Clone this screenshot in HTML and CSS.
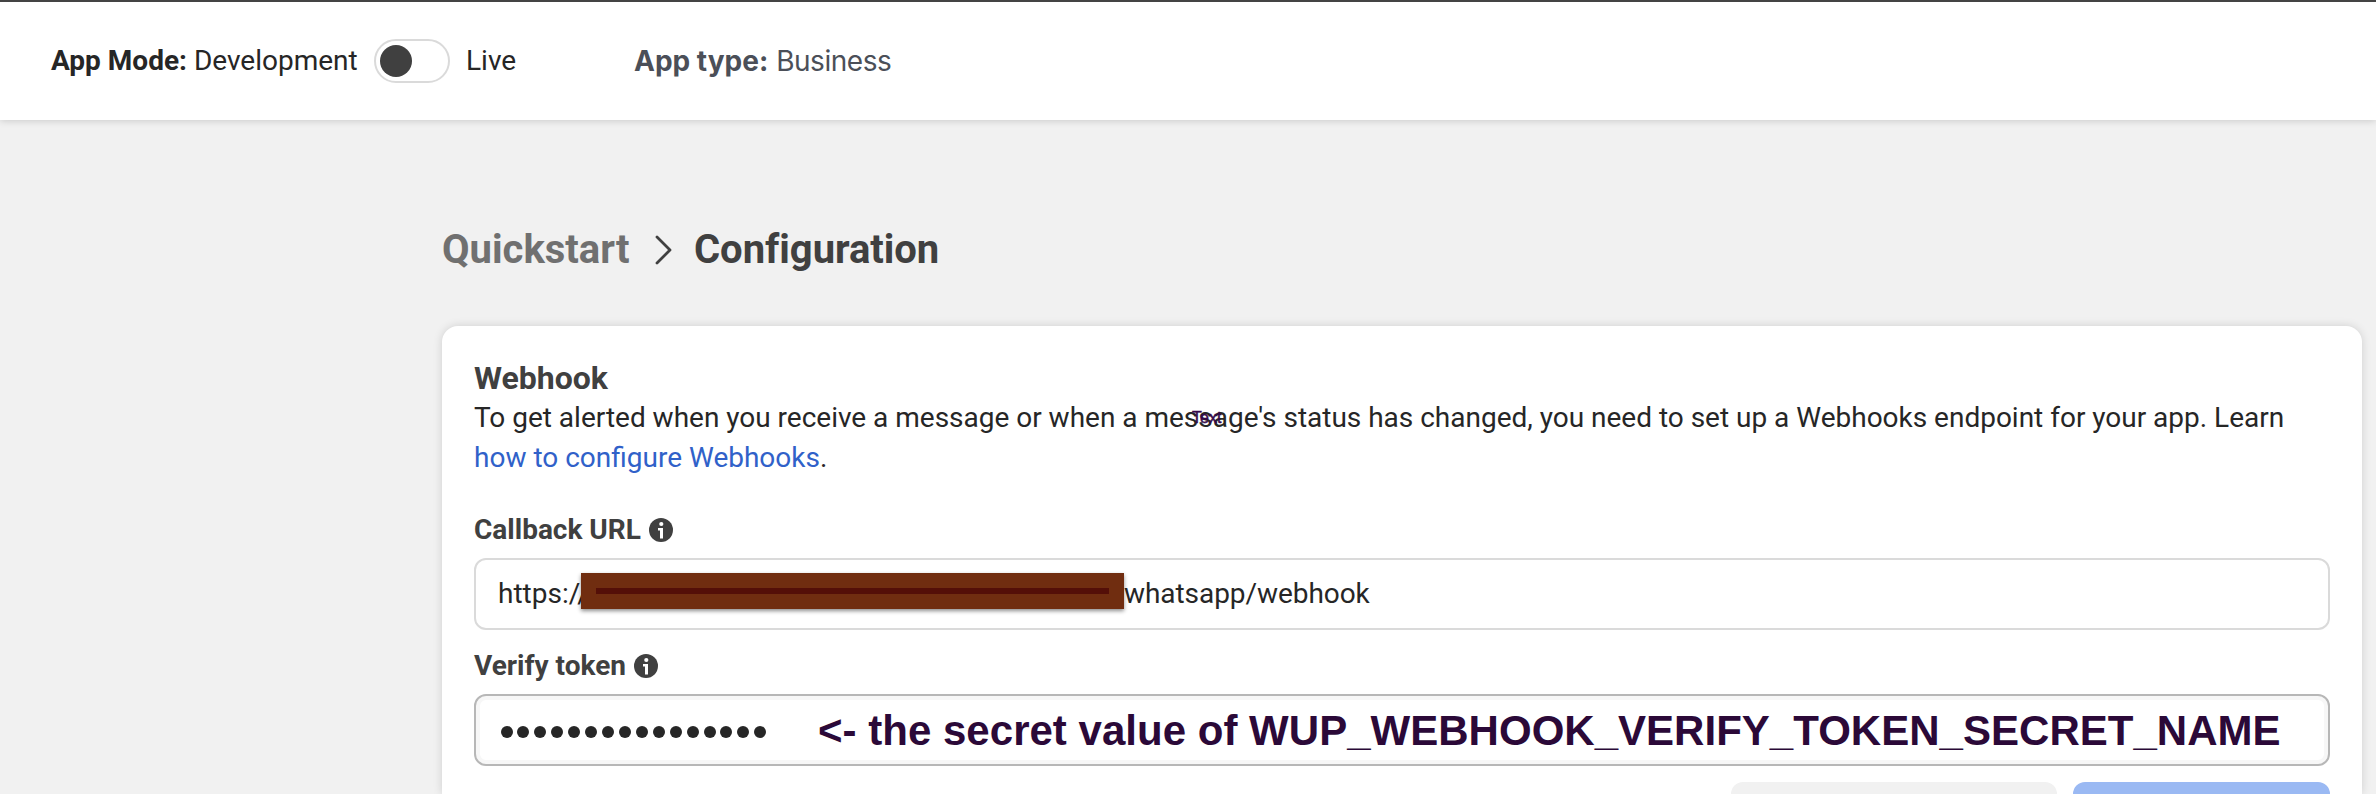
FILE: index.html
```html
<!DOCTYPE html>
<html lang="en">
<head>
<meta charset="utf-8">
<title>Configuration</title>
<link rel="stylesheet" href="styles.css">
</head>
<body>
<header class="topbar">
  <div class="mode"><b class="mode-label">App Mode:</b> <span class="mode-dev">Development</span></div>
  <span class="toggle"><span class="knob"></span></span>
  <span class="live">Live</span>
  <div class="type"><b>App type:</b> <span class="type-value">Business</span></div>
</header>
<main class="page">
  <nav class="crumbs">
    <span class="crumb-prev">Quickstart</span>
    <svg class="chevron" width="18" height="32" viewBox="0 0 18 32"><path d="M3 3 L16 16 L3 29" fill="none" stroke="#404040" stroke-width="2.8" stroke-linecap="round" stroke-linejoin="round"/></svg>
    <span class="crumb-now">Configuration</span>
  </nav>
  <section class="card">
    <h2 class="title">Webhook</h2>
    <p class="desc"><span class="line">To get alerted when you receive a message or when a message's status has changed, you need to set up a Webhooks endpoint for your app. Learn</span><br><a class="link">how to configure Webhooks</a>.<span class="stray">Text</span></p>
    <div class="label label-url"><span>Callback URL</span>
      <svg class="info" width="24" height="24" viewBox="0 0 24 24"><circle cx="12" cy="12" r="12" fill="#404040"/><circle cx="12.3" cy="6" r="2.1" fill="#fff"/><path d="M9 10h5v10.4h-3V12.4H9z" fill="#fff"/></svg>
    </div>
    <div class="input"><span class="scheme">https://</span><span class="redact"><span class="redact-line"></span></span><span class="path">whatsapp/webhook</span></div>
    <div class="label label-token"><span>Verify token</span>
      <svg class="info" width="24" height="24" viewBox="0 0 24 24"><circle cx="12" cy="12" r="12" fill="#404040"/><circle cx="12.3" cy="6" r="2.1" fill="#fff"/><path d="M9 10h5v10.4h-3V12.4H9z" fill="#fff"/></svg>
    </div>
    <div class="input input-active">
      <span class="dots"><i></i><i></i><i></i><i></i><i></i><i></i><i></i><i></i><i></i><i></i><i></i><i></i><i></i><i></i><i></i><i></i></span>
      <span class="note">&lt;- the secret value of WUP_WEBHOOK_VERIFY_TOKEN_SECRET_NAME</span>
    </div>
    <div class="actions"><span class="btn btn-gray"></span><span class="btn btn-blue"></span></div>
  </section>
</main>
</body>
</html>
```
FILE: styles.css
```css
* { box-sizing: border-box; }
body { margin: 0; height: 794px; overflow: hidden; background: #f1f1f1; font: 28px/40px Roboto, sans-serif; color: #262626; display: flex; flex-direction: column; white-space: nowrap; }
.topbar { position: relative; flex: none; height: 120px; border-top: 2px solid #444; background: #fff; box-shadow: 0 0 8px rgba(0,0,0,.2); display: flex; align-items: center; padding: 0 0 0 51px; }
.mode { width: 323px; }
.toggle { width: 76px; height: 44px; border: 2px solid #dadada; border-radius: 22px; padding: 4px; }
.knob { display: block; width: 32px; height: 32px; border-radius: 50%; background: #404040; }
.live { margin-left: 16px; width: 168px; }
.type { font-family: Inter, sans-serif; color: #4b4f58; }
.type-value { letter-spacing: -.45px; }
.page { flex: 1; min-height: 0; overflow: hidden; padding: 106px 14px 0 442px; display: flex; flex-direction: column; }
.crumbs { flex: none; height: 48px; display: flex; align-items: center; font-size: 40px; font-weight: 700; color: #404040; }
.crumb-prev { color: #707070; width: 212px; }
.crumb-now { letter-spacing: -.05px; }
.chevron { flex: none; margin-right: 22px; }
.card { flex: 1; min-height: 0; margin-top: 52px; background: #fff; border-radius: 16px 16px 0 0; box-shadow: 0 0 10px rgba(0,0,0,.14); padding: 32px 32px 0; }
.title { margin: 0; font-size: 32px; line-height: 40px; font-weight: 700; color: #404040; }
.desc { position: relative; margin: 0; }
.line { letter-spacing: -.01px; }
.link { color: #3061c9; }
.stray { position: absolute; left: 718px; top: 10px; font: 16px/20px "Liberation Sans", sans-serif; color: #35094a; -webkit-text-stroke: .5px #35094a; }
.label { display: flex; align-items: center; font-weight: 700; color: #404040; height: 40px; gap: 8px; }
.label-url { margin-top: 32px; }
.label-token { margin-top: 16px; }
.input { height: 72px; border: 2px solid #dadada; border-radius: 12px; padding-left: 22px; display: flex; align-items: center; margin-top: 8px; }
.scheme { width: 83px; }
.redact { position: relative; flex: none; width: 543px; height: 36px; margin-top: -6px; padding: 15px; background: #702d10; box-shadow: 0 2px 4px rgba(0,0,0,.45); }
.redact-line { display: block; height: 6px; background: #540f08; }
.path { letter-spacing: -.06px; }
.input-active { border-color: #b7b7b7; box-shadow: inset 0 0 0 4px #f7f7f7; }
.dots { display: flex; gap: 4.93px; padding: 3px 0 0 2.5px; width: 320px; flex: none; }
.dots i { width: 12px; height: 12px; border-radius: 50%; background: #262626; }
.note { font: 700 42px/48px "Liberation Sans", sans-serif; color: #2b0938; padding-top: 2px; letter-spacing: .02px; }
.actions { display: flex; justify-content: flex-end; gap: 16px; margin-top: 16px; }
.btn { height: 12px; border-radius: 12px 12px 0 0; }
.btn-gray { width: 326px; background: #f1f1f1; }
.btn-blue { width: 257px; background: #9ab9f3; }
```
